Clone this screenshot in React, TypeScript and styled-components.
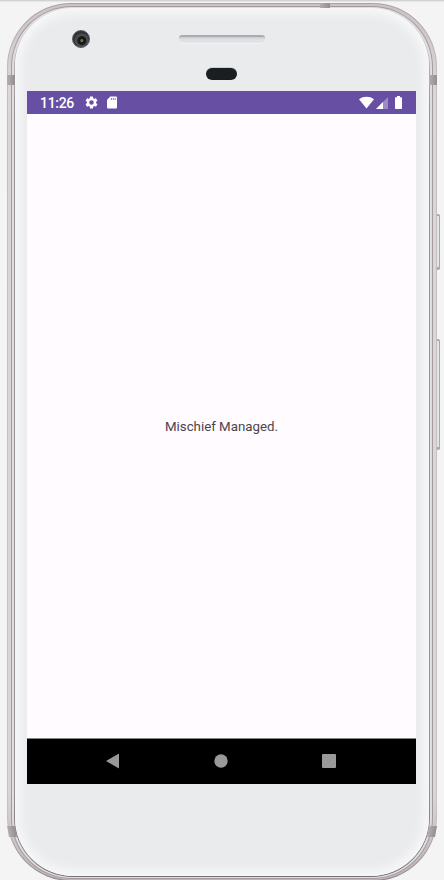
import React from "react";
import styled, { createGlobalStyle } from "styled-components";

const GlobalStyle = createGlobalStyle`
  * { box-sizing: border-box; }
  html, body { margin: 0; height: 880px; overflow: hidden; background: #f4f4f4; }
  body { font-family: Roboto, "Liberation Sans", sans-serif; }
`;

const Stage = styled.main`
  position: relative;
  width: 444px;
  height: 880px;
  padding: 2px 7px 0;
  border-top: 1px solid #d2d2d2;
  box-shadow: inset 0 1px #e6e6e6;
  overflow: hidden;
`;

const Rim = styled.div`
  width: 430px;
  height: 878px;
  padding: 1px;
  border-radius: 64px;
  background: linear-gradient(#a9a2a5, #c4bcbf 8%, #c8c0c3 92%, #8f878b);
`;

const Metal = styled.div`
  height: 100%;
  padding: 2px 3px 1px;
  border-radius: 63px;
  background: linear-gradient(#cbc3c6, #dcd6d9 10%, #dbd5d8 90%, #bdb4b8);
`;

const Groove = styled.div`
  height: 100%;
  padding: 1px;
  border-radius: 61px;
  background: #a39b9f;
`;

const InnerMetal = styled.div`
  height: 100%;
  padding: 1px 2px;
  border-radius: 60px;
  background: #e1dcde;
`;

const FaceEdge = styled.div`
  height: 100%;
  padding: 0 1px 1px;
  border-radius: 59px;
  background: linear-gradient(#d4d1d3, #979094 12%, #979094 90%, #737072);
`;

const Face = styled.div`
  height: 100%;
  display: flex;
  flex-direction: column;
  align-items: center;
  border-radius: 58px;
  background: #eaebed;
  box-shadow: inset 0 0 10px 6px #f6f7f8;
`;

const TopBezel = styled.header`
  position: relative;
  width: 100%;
  height: 83px;
  flex: none;
  display: flex;
  flex-direction: column;
  align-items: center;
  padding: 27px 1px 0 0;
`;

const Speaker = styled.div`
  width: 86px;
  height: 9px;
  border-radius: 3px 3px 5px 5px;
  border-top: 2px solid #a9adb1;
  border-bottom: 1px solid #f2f3f4;
  background: linear-gradient(#c9ccd0, #dddfe2 40%, #e4e5e8);
`;

const Sensor = styled.div`
  width: 31px;
  height: 12px;
  margin: 24px 1px 0 0;
  border-radius: 6px;
  background: #1b1e21;
  box-shadow: 0 -1px #c9d0cd;
`;

const Camera = styled.div`
  position: absolute;
  left: 57px;
  top: 22px;
  width: 18px;
  height: 18px;
  border-radius: 50%;
  border: 1px solid #55585b;
  background: radial-gradient(circle at 55% 60%, #77733c 0 1px, #171a1c 2px 4px, #4b4e51 5px 6px, #303336 8px);
`;

const Screen = styled.section`
  width: 389px;
  height: 693px;
  margin-right: 1px;
  flex: none;
  display: flex;
  flex-direction: column;
  background: #fffbfe;
`;

const StatusBar = styled.div`
  height: 23px;
  display: flex;
  align-items: center;
  padding: 0 14px 0 13px;
  background: #6750a4;
  color: #fff;
`;

const Clock = styled.span`
  width: 44px;
  padding-top: 1px;
  font-size: 14px;
  font-weight: 500;
  line-height: 22px;
  letter-spacing: -0.3px;
`;

const StatusIcon = styled.svg<{ $gap?: number }>`
  display: block;
  flex: none;
  margin-left: ${(p) => p.$gap ?? 0}px;
`;

const Spacer = styled.span`
  flex: 1;
`;

const Content = styled.div`
  flex: 1;
  display: flex;
  align-items: center;
  justify-content: center;
  padding-top: 2px;
`;

const Message = styled.p`
  margin: 0;
  font-size: 13.3px;
  line-height: 20px;
  color: #49454f;
  white-space: nowrap;
`;

const NavBar = styled.nav`
  height: 46px;
  display: grid;
  grid-template-columns: repeat(3, 108px);
  justify-content: center;
  align-items: center;
  justify-items: center;
  padding: 0 2px 1px 0;
  border-top: 1px solid #858386;
  background: #000;
`;

const SideKey = styled.div<{ $top: number; $height: number }>`
  position: absolute;
  left: 437px;
  top: ${(p) => p.$top}px;
  width: 3px;
  height: ${(p) => p.$height}px;
  border-radius: 0 2px 2px 0;
  border: solid #aaa8a8;
  border-width: 2px 1px 3px 0;
  background: #e2e5e4;
`;

const Antenna = styled.div<{ $x: number; $y: number; $w: number; $h: number; $tilt?: number }>`
  position: absolute;
  left: ${(p) => p.$x}px;
  top: ${(p) => p.$y}px;
  width: ${(p) => p.$w}px;
  height: ${(p) => p.$h}px;
  background: linear-gradient(90deg, #b5adb1, #948c91);
  transform: skewX(${(p) => p.$tilt ?? 0}deg);
`;

export default function App() {
  return (
    <>
      <GlobalStyle />
      <Stage>
        <Rim>
          <Metal>
            <Groove>
              <InnerMetal>
                <FaceEdge>
                  <Face>
                    <TopBezel>
                      <Camera />
                      <Speaker />
                      <Sensor />
                    </TopBezel>
                    <Screen>
                      <StatusBar>
                        <Clock>11:26</Clock>
                        <StatusIcon width="15" height="15" viewBox="0 0 24 24" fill="#fff">
                          <path d="M19.14 12.94c.04-.3.06-.61.06-.94 0-.32-.02-.64-.07-.94l2.03-1.58a.49.49 0 0 0 .12-.61l-1.92-3.32a.488.488 0 0 0-.59-.22l-2.39.96c-.5-.38-1.03-.7-1.62-.94l-.36-2.54a.484.484 0 0 0-.48-.41h-3.84c-.24 0-.43.17-.47.41l-.36 2.54c-.59.24-1.13.57-1.62.94l-2.39-.96c-.22-.08-.47 0-.59.22L2.74 8.87c-.12.21-.08.47.12.61l2.03 1.58c-.05.3-.09.63-.09.94s.02.64.07.94l-2.03 1.58a.49.49 0 0 0-.12.61l1.92 3.32c.12.22.37.29.59.22l2.39-.96c.5.38 1.03.7 1.62.94l.36 2.54c.05.24.24.41.48.41h3.84c.24 0 .44-.17.47-.41l.36-2.54c.59-.24 1.13-.56 1.62-.94l2.39.96c.22.08.47 0 .59-.22l1.92-3.32c.12-.22.07-.47-.12-.61l-2.01-1.58zM12 15.6A3.6 3.6 0 1 1 12 8.4a3.6 3.6 0 0 1 0 7.2z" />
                        </StatusIcon>
                        <StatusIcon $gap={8} width="10" height="13" viewBox="0 0 10 13">
                          <path d="M3.3.5H9a1 1 0 0 1 1 1v10a1 1 0 0 1-1 1H1a1 1 0 0 1-1-1V4z" fill="#fff" />
                          <path d="M4.4 2v2M6.3 2v2M8.2 2v2" stroke="#6750a4" strokeWidth=".8" />
                        </StatusIcon>
                        <Spacer />
                        <StatusIcon width="15" height="13" viewBox="0 0 15 13">
                          <path d="M0 3.2C4.2-.1 10.8-.1 15 3.2L7.5 12.5z" fill="#fff" />
                        </StatusIcon>
                        <StatusIcon $gap={2} width="12" height="12" viewBox="0 0 12 12">
                          <path d="M0 12L12 0v12z" fill="#9c8cc4" />
                          <path d="M0 12L7 5v7z" fill="#fff" />
                        </StatusIcon>
                        <StatusIcon $gap={7} width="7" height="13" viewBox="0 0 7 13">
                          <path d="M2 0h3v1.2h1.2a.8.8 0 0 1 .8.8v10.2a.8.8 0 0 1-.8.8H.8a.8.8 0 0 1-.8-.8V2a.8.8 0 0 1 .8-.8H2z" fill="#fff" />
                        </StatusIcon>
                      </StatusBar>
                      <Content>
                        <Message>Mischief Managed.</Message>
                      </Content>
                      <NavBar>
                        <svg width="14" height="16" viewBox="0 0 14 16">
                          <path d="M0 8L13 .4v15.2z" fill="#999" />
                        </svg>
                        <svg width="14" height="14" viewBox="0 0 14 14">
                          <circle cx="7" cy="7" r="6.7" fill="#999" />
                        </svg>
                        <svg width="14" height="14" viewBox="0 0 14 14">
                          <rect width="14" height="14" rx="1" fill="#999" />
                        </svg>
                      </NavBar>
                    </Screen>
                  </Face>
                </FaceEdge>
              </InnerMetal>
            </Groove>
          </Metal>
        </Rim>
        <SideKey $top={213} $height={56} />
        <SideKey $top={338} $height={111} />
        <Antenna $x={320} $y={2} $w={10} $h={5} />
        <Antenna $x={7} $y={74} $w={8} $h={10} />
        <Antenna $x={429} $y={74} $w={8} $h={10} />
        <Antenna $x={8} $y={825} $w={8} $h={11} $tilt={10} />
        <Antenna $x={428} $y={825} $w={8} $h={11} $tilt={-10} />
      </Stage>
    </>
  );
}
